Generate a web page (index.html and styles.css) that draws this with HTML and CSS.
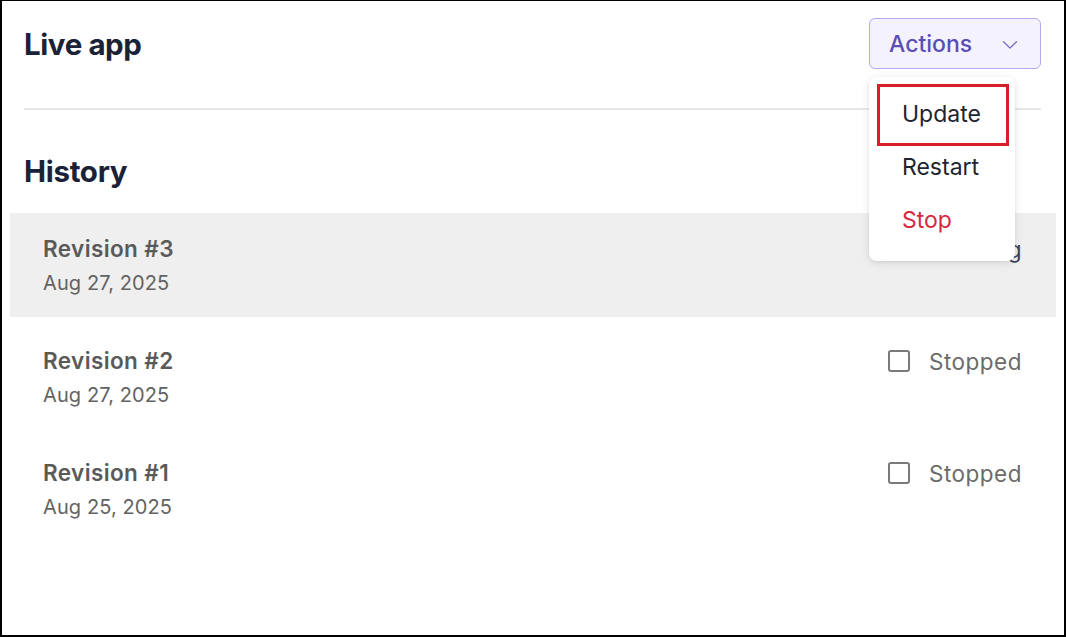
FILE: index.html
```html
<!DOCTYPE html>
<html lang="en">
<head>
<meta charset="utf-8">
<title>Live app</title>
<link rel="stylesheet" href="styles.css">
</head>
<body>
<div class="frame">
  <header class="header">
    <h1 class="title">Live app</h1>
    <div class="actions">
      <button class="actions-btn" type="button">
        <span>Actions</span>
        <svg class="chev" width="16" height="10" viewBox="0 0 16 10" aria-hidden="true"><path d="M1.5 1.8 L8 8 L14.5 1.8" fill="none" stroke="#7b73c2" stroke-width="1.4" stroke-linecap="round" stroke-linejoin="round"/></svg>
      </button>
      <ul class="menu">
        <li class="menu-item">Update</li>
        <li class="menu-item">Restart</li>
        <li class="menu-item danger">Stop</li>
        <span class="mark" aria-hidden="true"></span>
      </ul>
    </div>
  </header>
  <hr class="sep">
  <h2 class="section">History</h2>
  <ul class="rows">
    <li class="row active">
      <div class="info">
        <div class="rev">Revision #3</div>
        <div class="date">Aug 27, 2025</div>
      </div>
      <div class="status running">
        <svg class="spin" width="22" height="22" viewBox="0 0 22 22" aria-hidden="true"><circle cx="11" cy="11" r="9" fill="none" stroke="#3d4456" stroke-width="2" stroke-dasharray="42 15" stroke-linecap="round"/></svg>
        <span>Running</span>
      </div>
    </li>
    <li class="row">
      <div class="info">
        <div class="rev">Revision #2</div>
        <div class="date">Aug 27, 2025</div>
      </div>
      <div class="status"><span class="box"></span><span>Stopped</span></div>
    </li>
    <li class="row">
      <div class="info">
        <div class="rev">Revision #1</div>
        <div class="date">Aug 25, 2025</div>
      </div>
      <div class="status"><span class="box"></span><span>Stopped</span></div>
    </li>
  </ul>
</div>
</body>
</html>
```

FILE: styles.css
```css
* { box-sizing: border-box; }
html, body { margin: 0; padding: 0; background: #fff; }
body { font-family: Inter, "Noto Sans", sans-serif; }

.frame {
  width: 1066px;
  height: 637px;
  border: 2px solid #000;
  border-top-width: 1px;
  padding: 0 8px;
  overflow: hidden;
}

.header {
  display: flex;
  justify-content: space-between;
  align-items: center;
  padding: 17px 15px 0 14px;
}

.title {
  margin: 0;
  font-size: 29.5px;
  line-height: 36px;
  font-weight: 700;
  color: #1b2238;
  letter-spacing: -0.4px;
}

.actions { position: relative; }

.actions-btn {
  display: flex;
  align-items: center;
  justify-content: space-between;
  width: 172px;
  height: 51px;
  padding: 0 22px 0 19px;
  background: #f4f2fe;
  border: 1px solid #b2a9ef;
  border-radius: 6px;
  font-family: Inter, "Noto Sans", sans-serif;
  font-size: 23px;
  font-weight: 500;
  color: #5a4db6;
}

.chev { display: block; margin-top: 2px; }

.menu {
  position: absolute;
  top: 59px;
  left: 0;
  width: 146px;
  margin: 0;
  padding: 11px 0 14px;
  list-style: none;
  background: #fff;
  border-radius: 8px;
  box-shadow: 0 2px 10px rgba(0,0,0,0.10), 0 1px 3px rgba(0,0,0,0.06);
  z-index: 5;
}

.menu-item {
  height: 53px;
  line-height: 53px;
  padding-left: 33px;
  font-size: 23px;
  color: #1f2430;
}
.menu-item.danger { color: #d42a3f; }

.mark {
  position: absolute;
  left: 8px;
  top: 7px;
  width: 132px;
  height: 62px;
  border: 3px solid #d71f27;
}

.sep {
  margin: 39px 15px 0 14px;
  border: 0;
  border-top: 2px solid #e7e7ea;
}

.section {
  margin: 43px 14px 0;
  font-size: 29.5px;
  line-height: 36px;
  font-weight: 700;
  color: #1b2238;
  letter-spacing: -0.3px;
}

.rows {
  list-style: none;
  margin: 24px 0 0;
  padding: 0;
  display: flex;
  flex-direction: column;
  gap: 8px;
}

.row {
  height: 104px;
  padding: 22px 34px 0 33px;
  display: flex;
  justify-content: space-between;
  align-items: flex-start;
}
.row.active { background: #efefef; }

.rev {
  font-size: 22.5px;
  line-height: 28px;
  font-weight: 600;
  color: #5a5a5a;
  letter-spacing: 0.4px;
}
.date {
  margin-top: 6px;
  font-size: 20px;
  line-height: 28px;
  color: #636363;
  letter-spacing: 0.1px;
}

.status {
  display: flex;
  align-items: center;
  gap: 19px;
  height: 28px;
  font-size: 22.5px;
  color: #6b6b6b;
  letter-spacing: 0.5px;
}
.status.running { color: #3d4456; }

.box {
  width: 22px;
  height: 22px;
  border: 2px solid #7a7a7a;
  border-radius: 3px;
  background: #fff;
}
.spin { display: block; }
```
